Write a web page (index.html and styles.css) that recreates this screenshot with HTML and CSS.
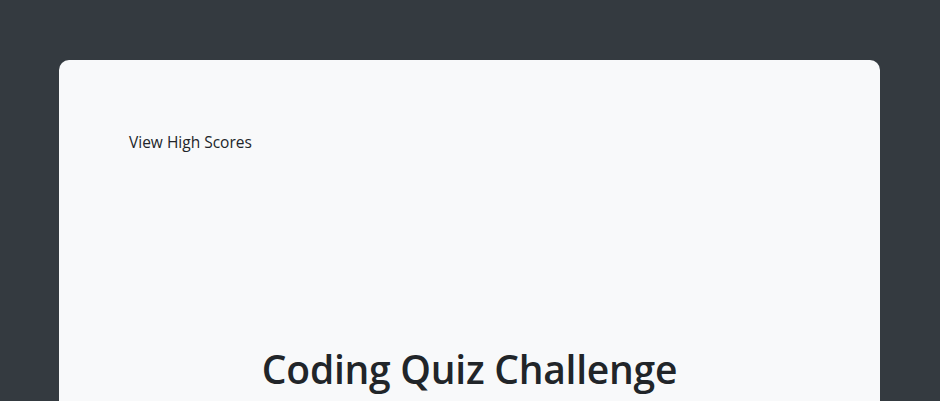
FILE: index.html
```html
<!DOCTYPE html>
<html lang="en">
<head>
<meta charset="utf-8">
<title>Coding Quiz Challenge</title>
<link rel="stylesheet" href="styles.css">
</head>
<body>
<main class="card">
  <header class="top">
    <a class="scores-link">View High Scores</a>
  </header>
  <section class="intro">
    <h1 class="title">Coding Quiz Challenge</h1>
  </section>
</main>
</body>
</html>
```
FILE: styles.css
```css
html, body {
  margin: 0;
  padding: 0;
}
body {
  background: #343a40;
  font-family: "Open Sans", "Noto Sans", sans-serif;
  color: #212529;
  padding-top: 60px;
  height: 401px;
  box-sizing: border-box;
  overflow: hidden;
}
.card {
  width: 821px;
  margin: 0 60px 0 59px;
  height: 341px;
  background: #f8f9fa;
  border-radius: 10px 10px 0 0;
  padding: 70px 70px 0;
  box-sizing: border-box;
  overflow: hidden;
}
.top {
  display: flex;
}
.scores-link {
  font-size: 15.5px;
  line-height: 24px;
  color: #212529;
}
.intro {
  text-align: center;
  margin-top: 191px;
}
.title {
  margin: 0;
  font-size: 39px;
  font-weight: 600;
  line-height: 48px;
  letter-spacing: -0.25px;
}
```
